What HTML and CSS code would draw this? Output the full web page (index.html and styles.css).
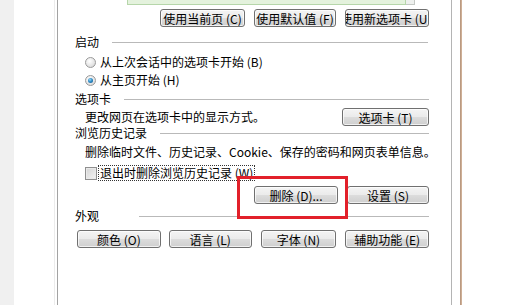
FILE: index.html
```html
<!DOCTYPE html>
<html>
<head>
  <meta charset="utf-8">
  <title>Internet 选项</title>
  <link rel="stylesheet" href="styles.css">
</head>
<body>
  <div class="page">
    <div class="side"></div>
    <div class="margin"></div>

    <div class="dialog">
      <!-- 主页地址框（上方被截断） -->
      <div class="home-box">
        <div class="home-text"></div>
        <div class="home-scroll"></div>
      </div>

      <div class="btn-row right">
        <button class="btn w85">使用当前页 (<u>C</u>)</button>
        <button class="btn w82">使用默认值 (<u>F</u>)</button>
        <button class="btn w84 clip">使用新选项卡 (<u>U</u>)</button>
      </div>

      <!-- 启动 -->
      <div class="group-title first"><span>启动</span><i></i></div>
      <label class="option">
        <span class="radio"></span>从上次会话中的选项卡开始 (<u>B</u>)
      </label>
      <label class="option">
        <span class="radio checked"></span>从主页开始 (<u>H</u>)
      </label>

      <!-- 选项卡 -->
      <div class="group-title"><span>选项卡</span><i></i></div>
      <div class="desc-row">
        <div class="desc">更改网页在选项卡中的显示方式。</div>
        <button class="btn w87">选项卡 (<u>T</u>)</button>
      </div>

      <!-- 浏览历史记录 -->
      <div class="group-title tight"><span>浏览历史记录</span><i></i></div>
      <div class="desc wide">删除临时文件、历史记录、Cookie、保存的密码和网页表单信息。</div>
      <label class="option check-row">
        <span class="checkbox"></span><span class="focus">退出时删除浏览历史记录 (<u>W</u>)</span>
      </label>
      <div class="btn-row right history-btns">
        <button class="btn w84">删除 (<u>D</u>)...</button>
        <button class="btn w82">设置 (<u>S</u>)</button>
      </div>

      <!-- 外观 -->
      <div class="group-title look"><span>外观</span><i></i></div>
      <div class="btn-row look-btns">
        <button class="btn w84">颜色 (<u>O</u>)</button>
        <button class="btn w83">语言 (<u>L</u>)</button>
        <button class="btn w76">字体 (<u>N</u>)</button>
        <button class="btn w84">辅助功能 (<u>E</u>)</button>
      </div>

      <div class="highlight"></div>
    </div>

    <div class="gap"></div>
    <div class="frame-edge"></div>
  </div>
</body>
</html>
```

FILE: styles.css
```css
body {
  margin: 0;
  background: #fff;
  font-family: "Noto Sans CJK SC", "Liberation Sans", sans-serif;
  font-size: 12px;
  color: #000;
  overflow: hidden;
}
.page {
  display: flex;
  width: 508px;
  height: 305px;
  background: #fff;
}
.side {
  width: 14px;
  background: #f0f0f0;
}
.margin {
  width: 40px;
  border-right: 1px solid #ececec;
  margin-right: 2px;
}
.dialog {
  position: relative;
  width: 354px;
  padding: 0 22px 0 17px;
  border-left: 1px solid #a3a3a3;
  border-right: 1px solid #b4b4b4;
}
.gap {
  width: 8px;
}
.frame-edge {
  width: 2px;
  background: linear-gradient(90deg, #b09078, #d8b9a0);
}

/* 主页地址框 */
.home-box {
  display: flex;
  margin-left: 52px;
  width: 288px;
  height: 5px;
}
.home-text {
  flex: 1;
  background: #e4f2dd;
  border: 1px solid #b6d6aa;
  border-top: none;
}
.home-scroll {
  width: 8px;
  background: #eef0ee;
  border-bottom: 1px solid #c4c8c4;
  border-right: 1px solid #c4c8c4;
}

/* 按钮 */
.btn-row {
  display: flex;
  gap: 9px;
}
.btn-row.right {
  justify-content: flex-end;
  margin-top: 4px;
}
.btn {
  height: 18px;
  padding: 0;
  border: 1px solid #707070;
  border-radius: 3px;
  background: linear-gradient(#f4f4f4 0%, #ebebeb 48%, #dcdcdc 52%, #cfcfcf 100%);
  box-shadow: inset 0 0 0 1px rgba(255, 255, 255, 0.7);
  font-family: inherit;
  font-size: 12px;
  line-height: 15px;
  color: #000;
  white-space: nowrap;
  overflow: hidden;
}
.btn u {
  text-decoration: none;
}
.btn.clip {
  text-indent: -6px;
}
.w76 { width: 76px; }
.w82 { width: 82px; }
.w83 { width: 83px; }
.w84 { width: 84px; }
.w85 { width: 85px; }
.w87 { width: 87px; }

/* 分组标题 */
.group-title {
  display: flex;
  align-items: center;
  height: 14px;
  line-height: 14px;
  margin-top: 3px;
}
.group-title span {
  margin-right: 13px;
}
.group-title i {
  flex: 1;
  height: 1px;
  background: #b9b9b9;
}
.group-title.first {
  margin-top: 8px;
  margin-right: 1px;
}
.group-title.tight {
  margin-top: 0;
}
.group-title.look {
  margin-top: 5px;
}
.group-title.look span {
  margin-right: 40px;
}

/* 单选 / 复选 */
.option {
  display: flex;
  align-items: center;
  height: 18px;
  line-height: 18px;
  padding-left: 10px;
  white-space: nowrap;
}
.option u {
  text-decoration: none;
}
.group-title.first + .option {
  margin-top: 4px;
}
.radio {
  width: 11px;
  height: 11px;
  margin-right: 4px;
  border-radius: 50%;
  border: 1px solid #9a9a9a;
  background: radial-gradient(circle at 40% 35%, #ffffff 0%, #e6e6e6 55%, #cfcfcf 100%);
  box-sizing: border-box;
  position: relative;
}
.radio.checked::after {
  content: '';
  position: absolute;
  left: 2px;
  top: 2px;
  width: 5px;
  height: 5px;
  border-radius: 50%;
  background: radial-gradient(circle at 40% 35%, #9fd6f4 0%, #2f8ec8 45%, #0e4f86 100%);
}
.check-row {
  margin-top: 3px;
  height: 18px;
}
.checkbox {
  width: 12px;
  height: 13px;
  margin-right: 2px;
  border: 1px solid #8f8f8f;
  box-sizing: border-box;
  background: linear-gradient(135deg, #d4d4d4, #f4f4f4);
  box-shadow: inset 0 0 0 1px #eaeaea;
}
.focus {
  outline: 1px dotted #333;
  line-height: 14px;
  padding: 0 1px;
}

/* 说明文字 */
.desc-row {
  display: flex;
  justify-content: space-between;
  align-items: center;
  margin-top: 2px;
  padding-left: 10px;
}
.desc {
  line-height: 18px;
  white-space: nowrap;
}
.desc.wide {
  padding-left: 10px;
  margin-top: 3px;
}
.history-btns {
  margin-top: 8px;
}
.look-btns {
  margin-top: 7px;
  margin-left: 2px;
  gap: 8px;
}
.look-btns .btn + .btn + .btn {
  margin-left: 1px;
}

/* 红色标注框 */
.highlight {
  position: absolute;
  left: 179px;
  top: 176px;
  width: 105px;
  height: 37px;
  border: 3px solid #e2202a;
}
```
